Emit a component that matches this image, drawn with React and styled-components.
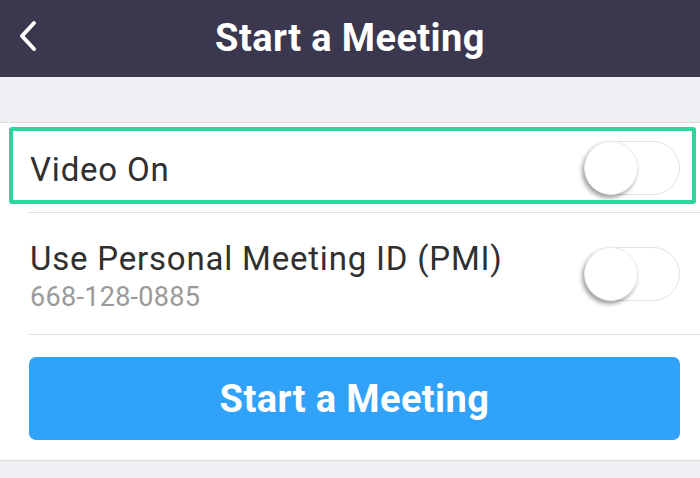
import styled, { createGlobalStyle } from "styled-components";

const GlobalStyle = createGlobalStyle`
  html, body {
    margin: 0;
    padding: 0;
    background: #efeff4;
    font-family: Roboto, "Liberation Sans", sans-serif;
  }
`

const Page = styled.div`
  display: flex;
  flex-direction: column;
  width: 700px;
  height: 478px;
  overflow: hidden;
  background: #efeff4;
`

const Header = styled.header`
  display: flex;
  position: relative;
  align-items: center;
  justify-content: center;
  height: 77px;
  flex-shrink: 0;
  background: #3a374f;
`

const BackButton = styled.button`
  position: absolute;
  left: 14px;
  top: 17px;
  display: flex;
  width: 32px;
  height: 40px;
  padding: 0;
  border: 0;
  background: none;
`

const Title = styled.h1`
  margin: 0 0 2px 0;
  color: #fff;
  font-size: 38px;
  font-weight: 700;
  letter-spacing: 0.4px;
`

const Section = styled.section`
  margin-top: 45px;
  background: #fff;
  border-top: 1px solid #dcdce0;
  border-bottom: 1px solid #dcdce0;
`

const Row = styled.div`
  display: flex;
  position: relative;
  align-items: center;
  justify-content: space-between;
  height: ${p => p.$height}px;
  padding: 0 20px 0 30px;
`

const Highlight = styled.div`
  position: absolute;
  top: 4px;
  left: 9px;
  right: 4px;
  bottom: 8px;
  border: 4px solid #2fd69b;
  border-radius: 3px;
  pointer-events: none;
`

const Label = styled.div`
  display: flex;
  flex-direction: column;
  gap: 5px;
  padding-top: 4px;
`

const LabelText = styled.span`
  color: #303030;
  font-size: 33px;
  line-height: 37px;
  letter-spacing: 0.8px;
  padding-top: ${p => p.$offset || 0}px;
`

const SubText = styled.span`
  color: #9a9a9a;
  font-size: 27px;
  line-height: 30px;
  letter-spacing: 0.3px;
`

const Divider = styled.div`
  height: 1px;
  margin-left: 28px;
  background: #e0e0e3;
`

const Track = styled.div`
  position: relative;
  width: 96px;
  height: 54px;
  flex-shrink: 0;
  border: 1.5px solid #e2e2e2;
  border-radius: 28px;
  background: #fff;
  box-sizing: border-box;
`

const Knob = styled.div`
  position: absolute;
  top: -1px;
  left: -1px;
  width: 54px;
  height: 54px;
  border-radius: 50%;
  background: #fff;
  box-sizing: border-box;
  border: 1px solid #ececec;
  box-shadow: -2px 3px 4px rgba(0, 0, 0, 0.38);
`

const ButtonWrap = styled.div`
  padding: 22px 20px 20px 29px;
`

const StartButton = styled.button`
  display: flex;
  align-items: center;
  justify-content: center;
  width: 100%;
  height: 83px;
  border: 0;
  border-radius: 7px;
  background: #30a2fa;
  color: #fff;
  font-family: Roboto, "Liberation Sans", sans-serif;
  font-size: 38px;
  font-weight: 700;
  letter-spacing: 0.4px;
`

function Toggle() {
    return (
        <Track>
            <Knob />
        </Track>
    )
}

export default function App() {
    return (
        <>
            <GlobalStyle />
            <Page>
                <Header>
                    <BackButton aria-label="Back">
                        <svg width="32" height="40" viewBox="0 0 32 40">
                            <polyline points="20,6 8,19 20,32" fill="none" stroke="#fff" strokeWidth="4" strokeLinecap="round" strokeLinejoin="round" />
                        </svg>
                    </BackButton>
                    <Title>Start a Meeting</Title>
                </Header>

                <Section>
                    <Row $height={89}>
                        <LabelText $offset={4}>Video On</LabelText>
                        <Toggle />
                        <Highlight />
                    </Row>
                    <Divider />
                    <Row $height={121}>
                        <Label>
                            <LabelText>Use Personal Meeting ID (PMI)</LabelText>
                            <SubText>668-128-0885</SubText>
                        </Label>
                        <Toggle />
                    </Row>
                    <Divider />
                    <ButtonWrap>
                        <StartButton>Start a Meeting</StartButton>
                    </ButtonWrap>
                </Section>
            </Page>
        </>
    )
}
